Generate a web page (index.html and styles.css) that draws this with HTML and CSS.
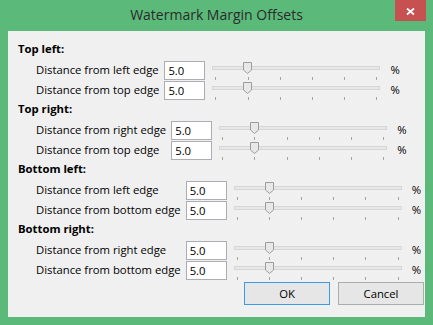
FILE: index.html
```html
<!DOCTYPE html>
<html lang="en">
<head>
    <meta charset="UTF-8">
    <title>Watermark Margin Offsets</title>
    <link rel="stylesheet" href="styles.css">
</head>
<body>

    <div class="window">
        <div class="titlebar">
            <span class="title">Watermark Margin Offsets</span>
            <button class="close" title="Close">
                <svg width="31" height="21" viewBox="0 0 31 21">
                    <path d="M12 8.5 L19 14.5 M19 8.5 L12 14.5" stroke="#fff" stroke-width="1.7" fill="none"/>
                </svg>
            </button>
        </div>

        <div class="client">

            <div class="group">
                <div class="group-title">Top left:</div>
                <div class="rows">
                    <label>Distance from left edge</label>
                    <input type="text" value="5.0">
                    <div class="slider">
                        <div class="track"></div>
                        <div class="ticks"><i></i><i></i><i></i><i></i><i></i><i></i></div>
                        <svg class="thumb" width="9" height="12" viewBox="0 0 9 12"><path d="M0.5 0.5 H8.5 V8 L4.5 11.5 L0.5 8 Z" fill="#e8e8e8" stroke="#9c9c9c"/></svg>
                    </div>
                    <span class="unit">%</span>

                    <label>Distance from top edge</label>
                    <input type="text" value="5.0">
                    <div class="slider">
                        <div class="track"></div>
                        <div class="ticks"><i></i><i></i><i></i><i></i><i></i><i></i></div>
                        <svg class="thumb" width="9" height="12" viewBox="0 0 9 12"><path d="M0.5 0.5 H8.5 V8 L4.5 11.5 L0.5 8 Z" fill="#e8e8e8" stroke="#9c9c9c"/></svg>
                    </div>
                    <span class="unit">%</span>
                </div>
            </div>

            <div class="group">
                <div class="group-title">Top right:</div>
                <div class="rows">
                    <label>Distance from right edge</label>
                    <input type="text" value="5.0">
                    <div class="slider">
                        <div class="track"></div>
                        <div class="ticks"><i></i><i></i><i></i><i></i><i></i><i></i></div>
                        <svg class="thumb" width="9" height="12" viewBox="0 0 9 12"><path d="M0.5 0.5 H8.5 V8 L4.5 11.5 L0.5 8 Z" fill="#e8e8e8" stroke="#9c9c9c"/></svg>
                    </div>
                    <span class="unit">%</span>

                    <label>Distance from top edge</label>
                    <input type="text" value="5.0">
                    <div class="slider">
                        <div class="track"></div>
                        <div class="ticks"><i></i><i></i><i></i><i></i><i></i><i></i></div>
                        <svg class="thumb" width="9" height="12" viewBox="0 0 9 12"><path d="M0.5 0.5 H8.5 V8 L4.5 11.5 L0.5 8 Z" fill="#e8e8e8" stroke="#9c9c9c"/></svg>
                    </div>
                    <span class="unit">%</span>
                </div>
            </div>

            <div class="group">
                <div class="group-title">Bottom left:</div>
                <div class="rows">
                    <label>Distance from left edge</label>
                    <input type="text" value="5.0">
                    <div class="slider">
                        <div class="track"></div>
                        <div class="ticks"><i></i><i></i><i></i><i></i><i></i><i></i></div>
                        <svg class="thumb" width="9" height="12" viewBox="0 0 9 12"><path d="M0.5 0.5 H8.5 V8 L4.5 11.5 L0.5 8 Z" fill="#e8e8e8" stroke="#9c9c9c"/></svg>
                    </div>
                    <span class="unit">%</span>

                    <label>Distance from bottom edge</label>
                    <input type="text" value="5.0">
                    <div class="slider">
                        <div class="track"></div>
                        <div class="ticks"><i></i><i></i><i></i><i></i><i></i><i></i></div>
                        <svg class="thumb" width="9" height="12" viewBox="0 0 9 12"><path d="M0.5 0.5 H8.5 V8 L4.5 11.5 L0.5 8 Z" fill="#e8e8e8" stroke="#9c9c9c"/></svg>
                    </div>
                    <span class="unit">%</span>
                </div>
            </div>

            <div class="group">
                <div class="group-title">Bottom right:</div>
                <div class="rows">
                    <label>Distance from right edge</label>
                    <input type="text" value="5.0">
                    <div class="slider">
                        <div class="track"></div>
                        <div class="ticks"><i></i><i></i><i></i><i></i><i></i><i></i></div>
                        <svg class="thumb" width="9" height="12" viewBox="0 0 9 12"><path d="M0.5 0.5 H8.5 V8 L4.5 11.5 L0.5 8 Z" fill="#e8e8e8" stroke="#9c9c9c"/></svg>
                    </div>
                    <span class="unit">%</span>

                    <label>Distance from bottom edge</label>
                    <input type="text" value="5.0">
                    <div class="slider">
                        <div class="track"></div>
                        <div class="ticks"><i></i><i></i><i></i><i></i><i></i><i></i></div>
                        <svg class="thumb" width="9" height="12" viewBox="0 0 9 12"><path d="M0.5 0.5 H8.5 V8 L4.5 11.5 L0.5 8 Z" fill="#e8e8e8" stroke="#9c9c9c"/></svg>
                    </div>
                    <span class="unit">%</span>
                </div>
            </div>

            <div class="actions">
                <button class="btn default">OK</button>
                <button class="btn">Cancel</button>
            </div>
        </div>
    </div>

</body>
</html>
```
FILE: styles.css
```css
body {
    margin: 0;
    background-color: #5bba7a;
    font-family: "Open Sans", "Noto Sans", sans-serif;
    font-size: 11.3px;
    color: #000;
}

.window {
    width: 433px;
    height: 325px;
}

.titlebar {
    position: relative;
    height: 31px;
    display: flex;
    justify-content: center;
    align-items: flex-start;
    box-sizing: border-box;
    padding-top: 5px;
}

.title {
    font-size: 14px;
    color: #2b2b2b;
}

.close {
    position: absolute;
    top: 0;
    right: 7px;
    width: 31px;
    height: 21px;
    padding: 0;
    border: none;
    background-color: #c75050;
}

.close svg {
    display: block;
}

.client {
    margin: 0 8px;
    height: 286px;
    box-sizing: border-box;
    padding-top: 10px;
    background-color: #f0f0f0;
}

.group-title {
    height: 20px;
    line-height: 16px;
    padding-left: 10px;
    font-weight: bold;
}

.rows {
    display: grid;
    grid-template-columns: max-content max-content max-content max-content;
    grid-auto-rows: 20px;
    align-items: start;
    justify-content: start;
    padding-left: 28px;
}

.rows label {
    line-height: 17px;
    white-space: nowrap;
}

.rows input {
    width: 41px;
    height: 19px;
    margin: 0 0 0 5px;
    padding: 0 3px;
    box-sizing: border-box;
    border: 1px solid #abadb3;
    background: #fff;
    font: inherit;
    color: #000;
    outline: none;
}

.slider {
    position: relative;
    width: 168px;
    height: 20px;
    margin-left: 7px;
}

.track {
    margin-top: 5px;
    height: 4px;
    box-sizing: border-box;
    border: 1px solid #d6d6d6;
    background-color: #e7e7e7;
}

.ticks {
    display: flex;
    justify-content: space-between;
    margin-top: 7px;
    padding: 0 3px;
}

.ticks i {
    display: block;
    width: 1px;
    height: 3px;
    background-color: #a3a3a3;
}

.thumb {
    position: absolute;
    top: 1px;
    left: 31px;
}

.unit {
    line-height: 17px;
    margin-left: 10px;
}

.actions {
    display: flex;
    justify-content: flex-end;
    gap: 8px;
    margin-top: 1px;
    padding-right: 1px;
}

.btn {
    width: 86px;
    height: 23px;
    padding: 0;
    border: 1px solid #acacac;
    background-color: #e6e6e6;
    font: inherit;
    color: #000;
}

.btn.default {
    border-color: #3c9be8;
}
```
